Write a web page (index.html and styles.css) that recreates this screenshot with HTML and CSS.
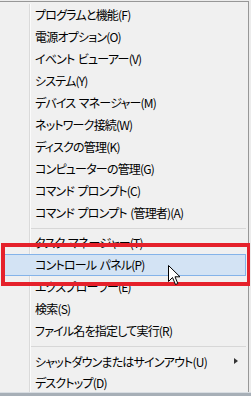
FILE: index.html
```html
<!DOCTYPE html>
<html lang="ja">
<head>
    <meta charset="UTF-8">
    <meta name="viewport" content="width=device-width, initial-scale=1.0">
    <title>クイック リンク メニュー</title>
    <link rel="stylesheet" href="styles.css">
</head>
<body>
    <div class="screen">
        <div class="menu">
            <ul class="menu-list">
                <li class="menu-item">プログラムと機能(F)</li>
                <li class="menu-item">電源オプション(O)</li>
                <li class="menu-item">イベント ビューアー(V)</li>
                <li class="menu-item">システム(Y)</li>
                <li class="menu-item">デバイス マネージャー(M)</li>
                <li class="menu-item">ネットワーク接続(W)</li>
                <li class="menu-item">ディスクの管理(K)</li>
                <li class="menu-item">コンピューターの管理(G)</li>
                <li class="menu-item">コマンド プロンプト(C)</li>
                <li class="menu-item">コマンド プロンプト (管理者)(A)</li>
                <li class="menu-sep"></li>
                <li class="menu-item">タスク マネージャー(T)</li>
                <li class="menu-item is-hover">コントロール パネル(P)</li>
                <li class="menu-item">エクスプローラー(E)</li>
                <li class="menu-item">検索(S)</li>
                <li class="menu-item">ファイル名を指定して実行(R)</li>
                <li class="menu-sep"></li>
                <li class="menu-item has-sub">シャットダウンまたはサインアウト(U)<span class="sub-arrow"></span></li>
                <li class="menu-item">デスクトップ(D)</li>
            </ul>
        </div>
        <div class="taskbar"></div>

        <!-- annotation box and mouse pointer drawn over the menu -->
        <div class="callout"></div>
        <svg class="cursor" width="13" height="20" viewBox="0 0 13 20">
            <path d="M0.5 0.5 L0.5 16.5 L4.5 12.5 L7.5 19.5 L9.8 18.5 L7 11.8 L12 11.8 Z" fill="#fff" stroke="#000" stroke-width="1" stroke-linejoin="miter"/>
        </svg>
    </div>
</body>
</html>
```

FILE: styles.css
```css
html, body {
    margin: 0;
    padding: 0;
}
body {
    background-color: #ececec;
    font-family: "Noto Sans CJK JP", "Liberation Sans", sans-serif;
    font-size: 12px;
    color: #000;
}
.screen {
    position: relative;
    width: 251px;
    height: 396px;
    overflow: hidden;
    padding-top: 1px;
    box-sizing: border-box;
}
.menu {
    width: 249px;
    height: 391px;
    box-sizing: border-box;
    background-color: #f0f0f0;
    border-top: 1px solid #979797;
    border-right: 1px solid #979797;
    padding-top: 2px;
    overflow: hidden;
}
.menu-list {
    list-style: none;
    margin: 0;
    padding: 0;
    /* gutter line between icon column and labels */
    background-image: linear-gradient(to right,
        transparent 29px, #dadada 29px, #dadada 30px,
        #fbfbfb 30px, #fbfbfb 31px, transparent 31px);
}
.menu-item {
    height: 22px;
    line-height: 21px;
    padding-left: 35px;
    white-space: nowrap;
    font-feature-settings: "palt";
    letter-spacing: -0.8px;
    word-spacing: 1.5px;
    position: relative;
}
.menu-item.is-hover {
    margin: 0 2px 0 3px;
    height: 20px;
    line-height: 19px;
    padding-left: 31px;
    background-color: #d3e3f4;
    border: 1px solid #84b3e9;
}
.menu-sep {
    height: 4px;
    margin: 0 2px 3px 31px;
    border-bottom: 1px solid #d7d7d7;
}
.has-sub {
    display: flex;
    align-items: center;
}
.sub-arrow {
    margin-left: auto;
    margin-right: 10px;
    width: 0;
    height: 0;
    border-top: 3.5px solid transparent;
    border-bottom: 3.5px solid transparent;
    border-left: 4px solid #333;
}
.taskbar {
    height: 4px;
    background-color: #a7afb7;
    border-top: 1px solid #d8dde2;
}
.callout {
    position: absolute;
    left: 1px;
    top: 243px;
    width: 249px;
    height: 43px;
    box-sizing: border-box;
    border: 4px solid #e5212b;
    border-right-width: 3px;
}
.cursor {
    position: absolute;
    left: 168px;
    top: 265px;
}
```
